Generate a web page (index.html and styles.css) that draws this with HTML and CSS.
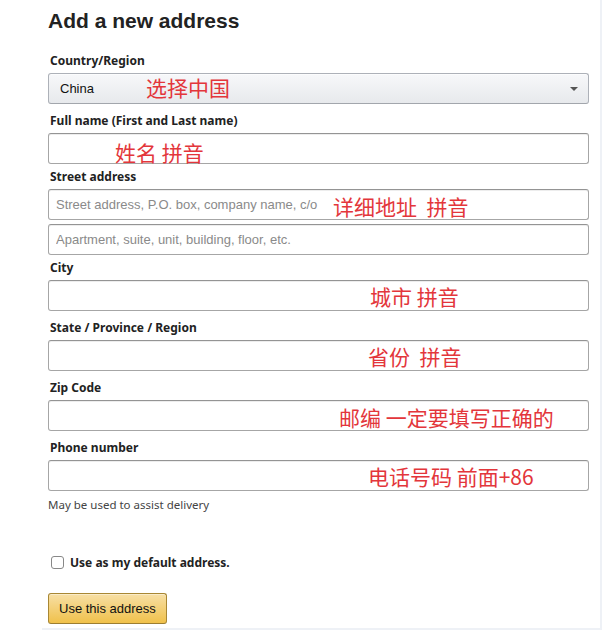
FILE: index.html
```html
<!DOCTYPE html>
<html lang="en">
<head>
<meta charset="utf-8">
<title>Add a new address</title>
<link rel="stylesheet" href="styles.css">
</head>
<body>
<div class="panel">
  <h1 class="title">Add a new address</h1>
  <form class="form">
    <div class="field">
      <label class="label">Country/Region</label>
      <div class="control">
        <div class="select"><span>China</span><span class="caret"></span></div>
        <span class="note note-country">选择中国</span>
      </div>
    </div>

    <div class="field field-tight">
      <label class="label">Full name (First and Last name)</label>
      <div class="control">
        <input class="input" type="text">
        <span class="note note-name">姓名 拼音</span>
      </div>
    </div>

    <div class="field field-tight">
      <label class="label">Street address</label>
      <div class="control control-stack">
        <input class="input" type="text" placeholder="Street address, P.O. box, company name, c/o">
        <span class="note note-street">详细地址&nbsp;&nbsp;拼音</span>
      </div>
      <div class="control">
        <input class="input" type="text" placeholder="Apartment, suite, unit, building, floor, etc.">
      </div>
    </div>

    <div class="field">
      <label class="label">City</label>
      <div class="control">
        <input class="input" type="text">
        <span class="note note-city">城市&nbsp;拼音</span>
      </div>
    </div>

    <div class="field">
      <label class="label">State / Province / Region</label>
      <div class="control">
        <input class="input" type="text">
        <span class="note note-state">省份&nbsp;&nbsp;拼音</span>
      </div>
    </div>

    <div class="field">
      <label class="label">Zip Code</label>
      <div class="control">
        <input class="input" type="text">
        <span class="note note-zip">邮编 一定要填写正确的</span>
      </div>
    </div>

    <div class="field field-last">
      <label class="label">Phone number</label>
      <div class="control">
        <input class="input" type="text">
        <span class="note note-phone">电话号码 前面+86</span>
      </div>
      <div class="help">May be used to assist delivery</div>
    </div>

    <label class="check">
      <input class="checkbox" type="checkbox">
      <span>Use as my default address.</span>
    </label>

    <button class="button" type="button">Use this address</button>
  </form>
</div>
</body>
</html>
```

FILE: styles.css
```css
html, body {
  margin: 0;
  padding: 0;
  background: #fff;
}

body {
  font-family: "Noto Sans", "Liberation Sans", sans-serif;
  color: #111;
}

.panel {
  box-sizing: border-box;
  width: 560px;
  margin-left: 42px;
  padding: 8px 11px 4px 6px;
  border-right: 2px solid #eef1f6;
  border-bottom: 2px solid #eef1f6;
}

.title {
  margin: 0 0 18px 0;
  font-family: "Liberation Sans", Arial, sans-serif;
  font-size: 21px;
  line-height: 26px;
  font-weight: 700;
  color: #222;
}

.form {
  display: flex;
  flex-direction: column;
  align-items: flex-start;
}

.field {
  width: 100%;
  margin-bottom: 8px;
}

.field-tight {
  margin-bottom: 4px;
}

.field-last {
  margin-bottom: 0;
}

.label {
  display: block;
  padding-left: 2px;
  margin-bottom: 4px;
  font-size: 12px;
  line-height: 17px;
  font-weight: 700;
  color: #222;
}

.control {
  position: relative;
  width: 100%;
}

.control-stack {
  margin-bottom: 4px;
}

.input {
  display: block;
  box-sizing: border-box;
  width: 100%;
  height: 31px;
  margin: 0;
  padding: 3px 7px;
  border: 1px solid #a6a6a6;
  border-top-color: #949494;
  border-radius: 3px;
  box-shadow: 0 1px 0 rgba(255,255,255,.5), 0 1px 0 rgba(0,0,0,.07) inset;
  background: #fff;
  font-family: "Liberation Sans", Arial, sans-serif;
  font-size: 13px;
  color: #111;
  outline: none;
}

.input::placeholder {
  color: #8a8a8a;
}

.select {
  box-sizing: border-box;
  display: flex;
  align-items: center;
  justify-content: space-between;
  width: 100%;
  height: 31px;
  padding: 0 10px 0 11px;
  border: 1px solid #adb1b8;
  border-bottom-color: #a2a6ac;
  border-radius: 3px;
  background: linear-gradient(to bottom, #f7f8fa, #e7e9ec);
  box-shadow: 0 1px 0 rgba(255,255,255,.6) inset;
  font-family: "Liberation Sans", Arial, sans-serif;
  font-size: 13px;
  color: #111;
}

.caret {
  width: 0;
  height: 0;
  border-left: 4px solid transparent;
  border-right: 4px solid transparent;
  border-top: 4px solid #555;
}

.note {
  position: absolute;
  font-family: "Noto Sans CJK SC", "Noto Sans", sans-serif;
  font-size: 21px;
  line-height: 24px;
  color: #e3363b;
  white-space: nowrap;
  pointer-events: none;
}

.note-country { left: 98px; top: 2px; }
.note-name { left: 67px; top: 7px; }
.note-street { left: 285px; top: 5px; }
.note-city { left: 322px; top: 4px; }
.note-state { left: 320px; top: 4px; }
.note-zip { left: 291px; top: 5px; }
.note-phone { left: 320px; top: 4px; }

.help {
  margin-top: 6px;
  font-size: 11.5px;
  line-height: 15px;
  color: #444;
}

.check {
  display: flex;
  align-items: center;
  gap: 6px;
  margin-top: 42px;
  padding-left: 3px;
  font-size: 12px;
  line-height: 17px;
  font-weight: 700;
  color: #222;
}

.checkbox {
  appearance: none;
  -webkit-appearance: none;
  box-sizing: border-box;
  width: 13px;
  height: 13px;
  margin: 0;
  border: 1px solid #888;
  border-radius: 3px;
  background: #fff;
}

.button {
  box-sizing: border-box;
  height: 31px;
  margin-top: 22px;
  padding: 0 10px;
  border: 1px solid #a88734;
  border-bottom-color: #9c7e31;
  border-radius: 3px;
  background: linear-gradient(to bottom, #f7dfa5, #f0c14b);
  box-shadow: 0 1px 0 rgba(255,255,255,.4) inset;
  font-family: "Liberation Sans", Arial, sans-serif;
  font-size: 13px;
  color: #111;
}
```
